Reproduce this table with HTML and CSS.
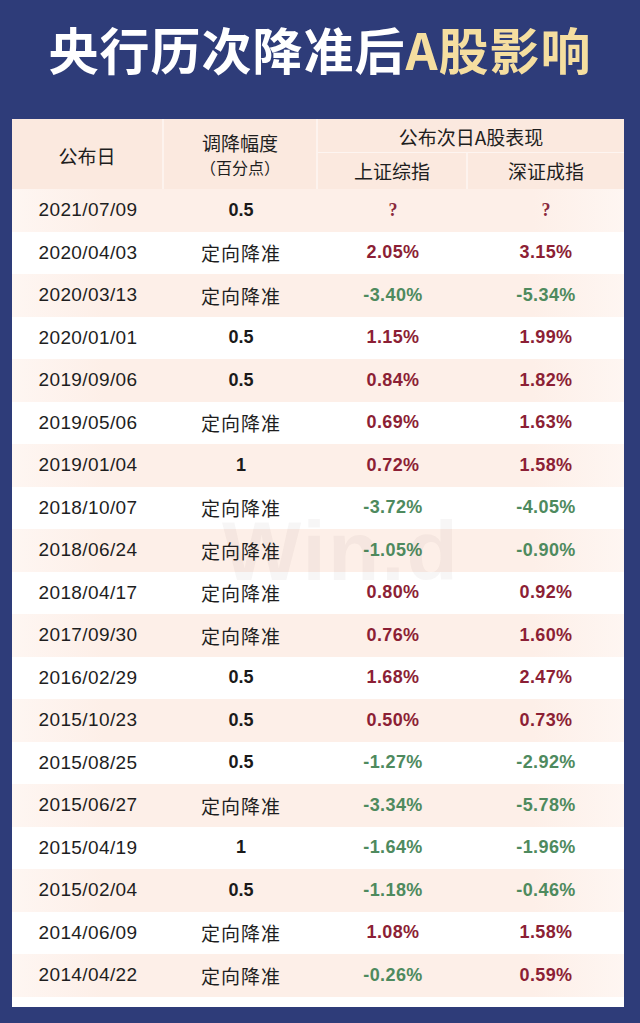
FILE: index.html
```html
<!DOCTYPE html>
<html lang="zh-CN">
<head>
<meta charset="utf-8">
<title>央行历次降准后A股影响</title>
<link rel="stylesheet" href="styles.css">
</head>
<body>
<div class="page">
  <h1 class="title">央行历次降准后<span class="gold">A股影响</span></h1>
  <div class="panel">
    <div class="watermark">Win.d</div>
    <div class="head">
      <div class="hc h-date">公布日</div>
      <div class="hc h-cut"><span>调降幅度</span><span class="sub">（百分点）</span></div>
      <div class="hc h-next">公布次日A股表现</div>
      <div class="hc h-sh">上证综指</div>
      <div class="hc h-sz">深证成指</div>
    </div>
    <div class="rows">
      <div class="row alt"><div class="d">2021/07/09</div><div class="b">0.5</div><div class="q">?</div><div class="q">?</div></div>
      <div class="row"><div class="d">2020/04/03</div><div class="c">定向降准</div><div class="up">2.05%</div><div class="up">3.15%</div></div>
      <div class="row alt"><div class="d">2020/03/13</div><div class="c">定向降准</div><div class="dn">-3.40%</div><div class="dn">-5.34%</div></div>
      <div class="row"><div class="d">2020/01/01</div><div class="b">0.5</div><div class="up">1.15%</div><div class="up">1.99%</div></div>
      <div class="row alt"><div class="d">2019/09/06</div><div class="b">0.5</div><div class="up">0.84%</div><div class="up">1.82%</div></div>
      <div class="row"><div class="d">2019/05/06</div><div class="c">定向降准</div><div class="up">0.69%</div><div class="up">1.63%</div></div>
      <div class="row alt"><div class="d">2019/01/04</div><div class="b">1</div><div class="up">0.72%</div><div class="up">1.58%</div></div>
      <div class="row"><div class="d">2018/10/07</div><div class="c">定向降准</div><div class="dn">-3.72%</div><div class="dn">-4.05%</div></div>
      <div class="row alt"><div class="d">2018/06/24</div><div class="c">定向降准</div><div class="dn">-1.05%</div><div class="dn">-0.90%</div></div>
      <div class="row"><div class="d">2018/04/17</div><div class="c">定向降准</div><div class="up">0.80%</div><div class="up">0.92%</div></div>
      <div class="row alt"><div class="d">2017/09/30</div><div class="c">定向降准</div><div class="up">0.76%</div><div class="up">1.60%</div></div>
      <div class="row"><div class="d">2016/02/29</div><div class="b">0.5</div><div class="up">1.68%</div><div class="up">2.47%</div></div>
      <div class="row alt"><div class="d">2015/10/23</div><div class="b">0.5</div><div class="up">0.50%</div><div class="up">0.73%</div></div>
      <div class="row"><div class="d">2015/08/25</div><div class="b">0.5</div><div class="dn">-1.27%</div><div class="dn">-2.92%</div></div>
      <div class="row alt"><div class="d">2015/06/27</div><div class="c">定向降准</div><div class="dn">-3.34%</div><div class="dn">-5.78%</div></div>
      <div class="row"><div class="d">2015/04/19</div><div class="b">1</div><div class="dn">-1.64%</div><div class="dn">-1.96%</div></div>
      <div class="row alt"><div class="d">2015/02/04</div><div class="b">0.5</div><div class="dn">-1.18%</div><div class="dn">-0.46%</div></div>
      <div class="row"><div class="d">2014/06/09</div><div class="c">定向降准</div><div class="up">1.08%</div><div class="up">1.58%</div></div>
      <div class="row alt"><div class="d">2014/04/22</div><div class="c">定向降准</div><div class="dn">-0.26%</div><div class="up">0.59%</div></div>
    </div>
  </div>
</div>
</body>
</html>
```

FILE: styles.css
```css
html, body {
  margin: 0;
  padding: 0;
  background: #2e3c79;
}
.page {
  width: 640px;
  height: 1023px;
  background: #2e3c79;
  overflow: hidden;
}
.title {
  margin: 0;
  height: 119px;
  line-height: 96px;
  text-align: center;
  color: #ffffff;
  font-family: "Noto Sans CJK SC", "Noto Sans", sans-serif;
  font-weight: 700;
  font-size: 50px;
  letter-spacing: 1px;
}
.gold {
  color: #f5dea0;
}
.panel {
  position: relative;
  margin-left: 12px;
  width: 612px;
  height: 888px;
  background: #ffffff;
  box-sizing: border-box;
}
.watermark {
  position: absolute;
  left: 210px;
  top: 384px;
  font-family: "Liberation Sans", Arial, sans-serif;
  font-weight: 700;
  font-size: 84px;
  color: rgba(60, 40, 40, 0.045);
  letter-spacing: 2px;
  pointer-events: none;
}
.head {
  display: grid;
  grid-template-columns: 152px 154px 150px 156px;
  grid-template-rows: 34px 36px;
  background: #fcefe8;
  font-family: "Noto Sans CJK SC", "Noto Sans", sans-serif;
  font-size: 19px;
  color: #1e1e1e;
}
.hc {
  background: #fbe9df;
  display: flex;
  align-items: center;
  justify-content: center;
  box-sizing: border-box;
}
.h-date {
  grid-column: 1;
  grid-row: 1 / 3;
  border-right: 2px solid #fdf3ee;
  padding-top: 2px;
}
.h-cut {
  grid-column: 2;
  grid-row: 1 / 3;
  flex-direction: column;
  line-height: 24px;
  border-right: 2px solid #fdf3ee;
  padding-top: 2px;
}
.h-cut .sub {
  font-size: 16px;
}
.h-next {
  grid-column: 3 / 5;
  grid-row: 1;
  border-bottom: 1px solid #fdf5f1;
  padding-top: 2px;
}
.h-sh {
  grid-column: 3;
  grid-row: 2;
  border-right: 2px solid #fdf3ee;
  padding-bottom: 2px;
}
.h-sz {
  grid-column: 4;
  grid-row: 2;
  padding-bottom: 2px;
}
.rows {
  display: flex;
  flex-direction: column;
}
.row {
  display: grid;
  grid-template-columns: 152px 154px 150px 156px;
  height: 42.5px;
  align-items: center;
  text-align: center;
  background: #ffffff;
}
.row.alt {
  background: linear-gradient(90deg, #fef6f2 0%, #fdefe8 15%, #fdefe8 85%, #fef6f2 100%);
}
.d {
  font-family: "Liberation Sans", Arial, sans-serif;
  font-size: 19px;
  letter-spacing: 0.4px;
  color: #1e1e1e;
}
.c {
  font-family: "Noto Sans CJK SC", "Noto Sans", sans-serif;
  font-size: 19px;
  letter-spacing: 1px;
  color: #1e1e1e;
}
.b {
  font-family: "Liberation Sans", Arial, sans-serif;
  font-weight: 700;
  font-size: 18px;
  color: #1a1a1a;
}
.q {
  font-family: "Liberation Serif", "Times New Roman", serif;
  font-weight: 700;
  font-size: 18px;
  color: #8a2a3c;
}
.up, .dn {
  font-family: "Liberation Sans", Arial, sans-serif;
  font-weight: 700;
  font-size: 18px;
  letter-spacing: 0.4px;
}
.up {
  color: #8c1f35;
}
.dn {
  color: #4e8a5e;
}
```
